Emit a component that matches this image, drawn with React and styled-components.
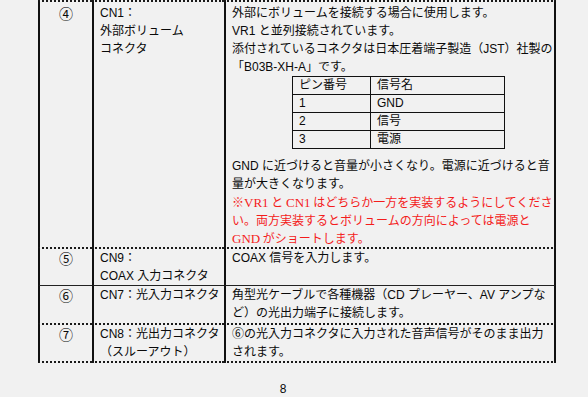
import React from 'react';
import styled, { createGlobalStyle } from 'styled-components';

const GlobalStyle = createGlobalStyle`
  html, body {
    margin: 0;
    padding: 0;
    background: #f1f1f1;
  }
  body {
    font-family: "Liberation Sans", "Noto Sans CJK JP", sans-serif;
    font-size: 12px;
    color: #0a0a0a;
  }
`;

const Sheet = styled.div`
  width: 588px;
  height: 397px;
  overflow: hidden;
  padding-left: 38px;
  box-sizing: border-box;
`;

const Spec = styled.table`
  border-collapse: separate;
  border-spacing: 0;
  table-layout: fixed;
  width: 518px;
`;

// row separators differ in the original doc: dotted rules and thin solid ones
const edges = {
  dotted: '2px dotted #1a1a1a',
  thin: '1px solid #222',
};

const Cell = styled.td`
  vertical-align: top;
  border-left: 2px solid #111;
  border-top: ${p => edges[p.$edge] || 'none'};
  border-bottom: ${p => (p.$last ? '2px dotted #1a1a1a' : 'none')};
  padding: ${p => (p.$lead ? '2px' : '0')} 0 0 6px;
  line-height: 18px;
  white-space: nowrap;
  &:last-child {
    border-right: 2px solid #111;
  }
`;

const NumCell = styled(Cell)`
  text-align: center;
  padding-left: 0;
  font-family: "Noto Sans CJK JP", sans-serif;
  font-size: 14px;
`;

const Line = styled.div`
  display: block;
  height: 18px;
`;

const Warn = styled(Line)`
  color: #f41c1c;
  font-family: "Noto Sans CJK JP", sans-serif;
`;

const Roman = styled.span`
  font-family: "Liberation Serif", serif;
  font-size: 13px;
`;

const PinTable = styled.table`
  border-collapse: collapse;
  table-layout: fixed;
  width: 212px;
  margin: 0 0 8px 60px;
`;

const PinCell = styled.td`
  border: 1px solid #111;
  height: 17px;
  padding: 0 0 0 6px;
  line-height: 17px;
`;

const Footer = styled.div`
  width: 490px;
  margin-top: 19px;
  text-align: center;
  line-height: 14px;
`;

const pins = [
  ['ピン番号', '信号名'],
  ['1', 'GND'],
  ['2', '信号'],
  ['3', '電源'],
];

const rows = [
  {
    no: '⑤',
    edge: 'dotted',
    name: ['CN9：', 'COAX 入力コネクタ'],
    desc: ['COAX 信号を入力します。'],
  },
  {
    no: '⑥',
    edge: 'thin',
    name: ['CN7：光入力コネクタ'],
    desc: ['角型光ケーブルで各種機器（CD プレーヤー、AV アンプな', 'ど）の光出力端子に接続します。'],
  },
  {
    no: '⑦',
    edge: 'dotted',
    name: ['CN8：光出力コネクタ', '（スルーアウト）'],
    desc: ['⑥の光入力コネクタに入力された音声信号がそのまま出力', 'されます。'],
  },
];

export default function App() {
  return (
    <>
      <GlobalStyle />
      <Sheet>
        <Spec>
          <colgroup>
            <col style={{ width: 54 }} />
            <col style={{ width: 132 }} />
            <col style={{ width: 332 }} />
          </colgroup>
          <tbody>
            <tr style={{ height: 245 }}>
              <NumCell $edge="dotted" $lead>④</NumCell>
              <Cell $edge="dotted" $lead>
                <Line>CN1：</Line>
                <Line>外部ボリューム</Line>
                <Line>コネクタ</Line>
              </Cell>
              <Cell $edge="dotted" $lead>
                <Line>外部にボリュームを接続する場合に使用します。</Line>
                <Line>VR1 と並列接続されています。</Line>
                <Line>添付されているコネクタは日本圧着端子製造（JST）社製の</Line>
                <Line>「B03B-XH-A」です。</Line>
                <PinTable>
                  <colgroup>
                    <col style={{ width: 78 }} />
                    <col style={{ width: 134 }} />
                  </colgroup>
                  <tbody>
                    {pins.map(([pin, sig]) => (
                      <tr key={pin}>
                        <PinCell>{pin}</PinCell>
                        <PinCell>{sig}</PinCell>
                      </tr>
                    ))}
                  </tbody>
                </PinTable>
                <Line>GND に近づけると音量が小さくなり。電源に近づけると音</Line>
                <Line>量が大きくなります。</Line>
                <Warn>※<Roman>VR1</Roman> と <Roman>CN1</Roman> はどちらか一方を実装するようにしてくださ</Warn>
                <Warn>い。両方実装するとボリュームの方向によっては電源と</Warn>
                <Warn><Roman>GND</Roman> がショートします。</Warn>
              </Cell>
            </tr>
            {rows.map((r, i) => {
              const last = i === rows.length - 1;
              return (
                <tr key={r.no} style={{ height: 38 }}>
                  <NumCell $edge={r.edge} $last={last}>{r.no}</NumCell>
                  <Cell $edge={r.edge} $last={last}>
                    {r.name.map(t => <Line key={t}>{t}</Line>)}
                  </Cell>
                  <Cell $edge={r.edge} $last={last}>
                    {r.desc.map(t => <Line key={t}>{t}</Line>)}
                  </Cell>
                </tr>
              );
            })}
          </tbody>
        </Spec>
        <Footer>8</Footer>
      </Sheet>
    </>
  );
}
